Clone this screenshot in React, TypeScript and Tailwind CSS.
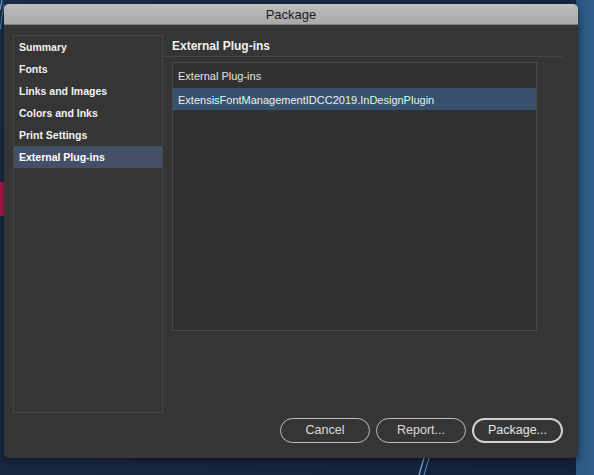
import React from 'react';

const sections = ['Summary', 'Fonts', 'Links and Images', 'Colors and Inks', 'Print Settings', 'External Plug-ins'];

function Wallpaper() {
  // desktop behind the dialog
  return (
    <svg className="absolute inset-0" width="594" height="475" viewBox="0 0 594 475">
      <defs>
        <linearGradient id="bg" x1="0" y1="0" x2="1" y2="1">
          <stop offset="0" stopColor="#1c2e48" />
          <stop offset="1" stopColor="#14223a" />
        </linearGradient>
        <linearGradient id="stripe" x1="0" y1="0" x2="1" y2="0">
          <stop offset="0" stopColor="#2b5884" />
          <stop offset="1" stopColor="#2f5f8a" />
        </linearGradient>
      </defs>
      <rect width="594" height="475" fill="url(#bg)" />
      <rect x="576" y="0" width="18" height="475" fill="url(#stripe)" />
      <path d="M2 0 L0 10" stroke="#6fa6d8" strokeWidth="1.2" />
      <path d="M4 4 L0 30" stroke="#4f86bd" strokeWidth="1" />
      <rect x="0" y="182" width="5" height="34" fill="#b01848" />
      <path d="M419 475 L424 458" stroke="#7db3e0" strokeWidth="1.2" />
      <path d="M424 475 L429 458" stroke="#5d93c6" strokeWidth="1" />
    </svg>
  );
}

export default function App() {
  return (
    <div className="relative w-[594px] h-[475px] overflow-hidden" style={{ fontFamily: '"Liberation Sans", Arial, sans-serif' }}>
      <Wallpaper />
      <div className="relative pl-[4px] pt-[4px]">
        <div className="w-[574px] h-[454px] rounded-[5px] overflow-hidden bg-[#353535] flex flex-col shadow-[0_2px_8px_rgba(0,0,0,0.5)]">
          {/* title bar */}
          <div className="h-[21px] shrink-0 bg-gradient-to-b from-[#bebebe] to-[#a9a9a9] border-b border-[#7e7e7e] flex items-center justify-center pt-px">
            <span className="text-[13px] text-[#1b1b1b] leading-none">Package</span>
          </div>

          <div className="flex flex-col pt-[10px] pl-[9px] pr-[15px]">
            <div className="flex h-[378px]">
              {/* sidebar */}
              <div className="w-[150px] h-full border border-[#474747]">
                {sections.map((s) => (
                  <div
                    key={s}
                    className={
                      'h-[22px] flex items-center pl-[5px] pt-px text-[10.5px] font-bold ' +
                      (s === 'External Plug-ins' ? 'bg-[#435068] text-white' : 'text-[#f2f2f2]')
                    }
                  >
                    {s}
                  </div>
                ))}
              </div>

              {/* right pane */}
              <div className="w-[400px] flex flex-col">
                <div className="h-[22px] flex items-center pl-[9px] pt-px text-[12px] font-bold text-[#f0f0f0] border-b border-[#454545]">
                  External Plug-ins
                </div>
                <div className="ml-[9px] mt-[5px] w-[365px] h-[269px] border border-[#4a4a4a] bg-[#313131]">
                  <div className="h-[25px] flex items-center pl-[5px] pt-[2px] text-[11px] text-[#e2e2e2]">External Plug-ins</div>
                  <div className="h-[22px] flex items-center pl-[5px] pt-[2px] text-[11px] text-[#eeeeee] bg-[#38526d]">
                    ExtensisFontManagementIDCC2019.InDesignPlugin
                  </div>
                </div>
              </div>
            </div>

            {/* buttons */}
            <div className="flex justify-end gap-[6px] mt-[5px]">
              <button className="w-[90px] h-[25px] rounded-full border-[1.5px] border-[#bdbdbd] text-[12.5px] text-[#dcdcdc]">Cancel</button>
              <button className="w-[90px] h-[25px] rounded-full border-[1.5px] border-[#bdbdbd] text-[12.5px] text-[#dcdcdc]">Report...</button>
              <button className="w-[91px] h-[25px] rounded-full border-2 border-[#d2d2d2] text-[12.5px] text-[#e4e4e4]">Package...</button>
            </div>
          </div>
        </div>
      </div>
    </div>
  );
}
